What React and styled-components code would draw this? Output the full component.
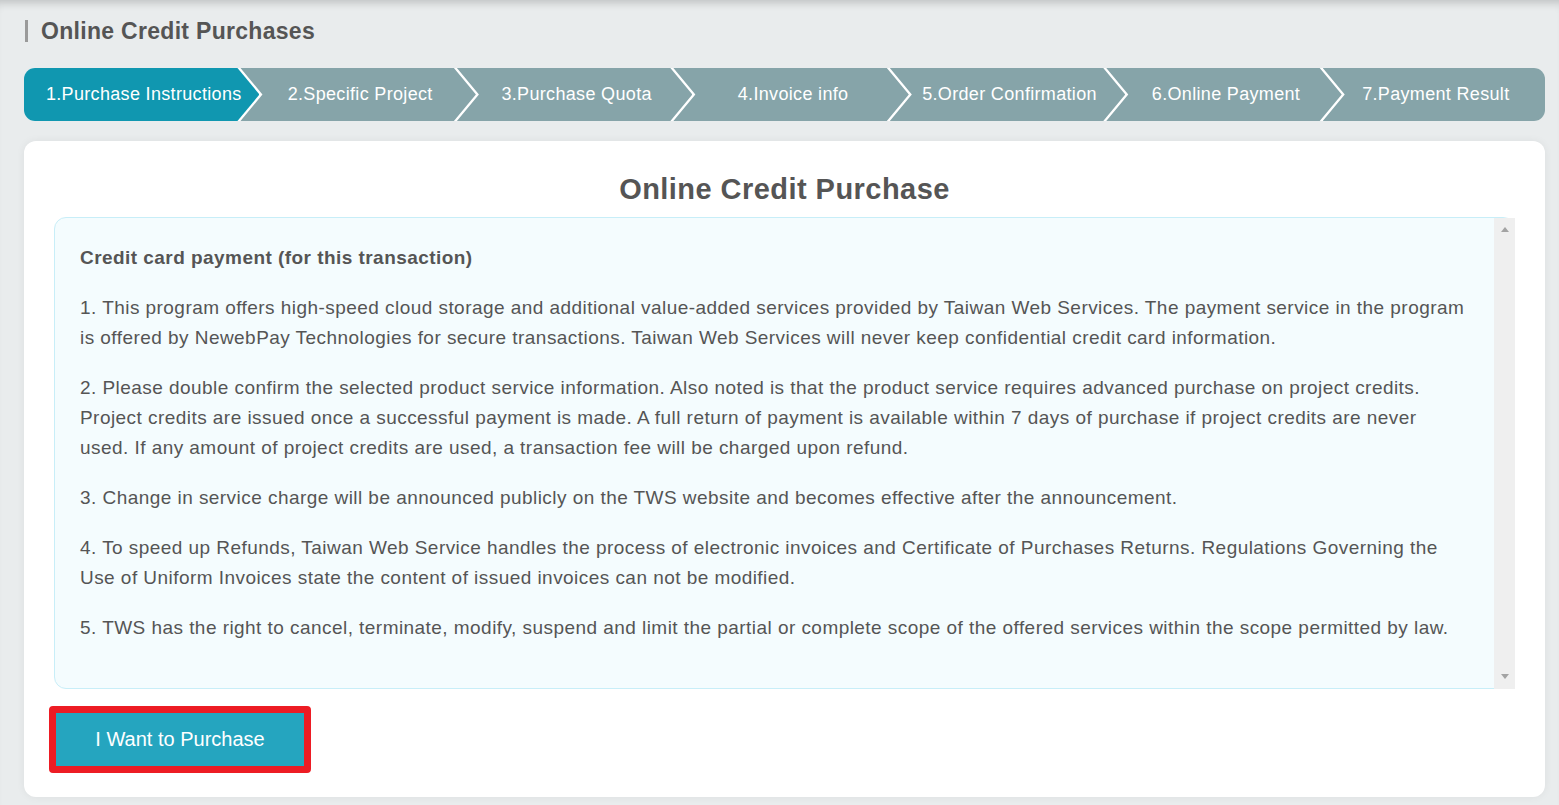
import React from 'react';
import styled, { createGlobalStyle } from 'styled-components';

const color = {
  page: '#e9eced',
  text: '#555555',
  active: '#1097b0',
  step: '#86a4a9',
  button: '#25a5bf',
  highlight: '#ed1c24',
  boxBg: '#f4fcfe',
  boxBorder: '#c8eef8',
};

const GlobalStyle = createGlobalStyle`
  * { box-sizing: border-box; }
  html, body {
    margin: 0;
    background: ${color.page};
    font-family: "Liberation Sans", Arial, sans-serif;
    color: ${color.text};
  }
`;

const Page = styled.div`
  min-height: 805px;
  padding: 18px 14px 0 24px;
  box-shadow: inset 0 9px 9px -6px rgba(0, 0, 0, 0.18);
`;

const PageTitle = styled.h1`
  display: flex;
  align-items: center;
  gap: 13px;
  margin: 0 0 24px 1px;
  height: 26px;
  font-size: 23px;
  letter-spacing: 0.3px;
  font-weight: bold;
  color: ${color.text};

  &::before {
    content: '';
    width: 3px;
    height: 22px;
    background: #9a9a9a;
  }
`;

const Stepper = styled.ol`
  display: flex;
  margin: 0;
  padding: 0;
  list-style: none;
  height: 53px;
  border-radius: 11px;
  overflow: hidden;
  background: #ffffff;
`;

// arrow-shaped step; first has no notch, last has no tip
const Step = styled.li`
  flex: ${(p) => (p.$last ? 0.943 : 1)} 1 0;
  margin-left: ${(p) => (p.$first ? '0' : '-19px')};
  display: flex;
  align-items: center;
  justify-content: center;
  padding-left: 4px;
  font-size: 18px;
  letter-spacing: 0.33px;
  color: #ffffff;
  white-space: nowrap;
  background: ${(p) => (p.$active ? color.active : color.step)};
  clip-path: ${(p) =>
    p.$last
      ? 'polygon(0 0, 100% 0, 100% 100%, 0 100%, 22px 50%)'
      : p.$first
      ? 'polygon(0 0, calc(100% - 22px) 0, 100% 50%, calc(100% - 22px) 100%, 0 100%)'
      : 'polygon(0 0, calc(100% - 22px) 0, 100% 50%, calc(100% - 22px) 100%, 0 100%, 22px 50%)'};
`;

const Card = styled.section`
  margin-top: 20px;
  background: #ffffff;
  border-radius: 12px;
  padding: 28px 30px 24px;
  box-shadow: 0 0 8px rgba(0, 0, 0, 0.06);
`;

const CardTitle = styled.h2`
  margin: 0;
  line-height: 40px;
  font-size: 29px;
  letter-spacing: 0.45px;
  font-weight: bold;
  text-align: center;
  color: ${color.text};
`;

const NoticeBox = styled.div`
  display: flex;
  margin-top: 8px;
  height: 472px;
  background: ${color.boxBg};
  border: 1px solid ${color.boxBorder};
  border-radius: 12px;
`;

const NoticeText = styled.div`
  flex: 1;
  padding: 25px 25px 0 25px;
  font-size: 19px;
  letter-spacing: 0.45px;
  line-height: 30px;
  color: ${color.text};

  p {
    margin: 0 0 20px;
  }
`;

const NoticeHeading = styled.p`
  font-weight: bold;
  letter-spacing: 0.45px;
`;

const ScrollRail = styled.div`
  width: 21px;
  margin: 0 -1px -1px 0;
  background: #efefef;
  display: flex;
  flex-direction: column;
  justify-content: space-between;
  align-items: center;
  padding: 9px 0 10px;
`;

const RailArrow = styled.span`
  width: 0;
  height: 0;
  border-left: 4.5px solid transparent;
  border-right: 4.5px solid transparent;
  ${(p) =>
    p.$down
      ? 'border-top: 5px solid #a3a3a3;'
      : 'border-bottom: 5px solid #a3a3a3;'}
`;

const Highlight = styled.div`
  display: inline-block;
  margin: 17px 0 0 -5px;
  border: 7px solid ${color.highlight};
  border-radius: 4px;
`;

const PurchaseButton = styled.button`
  display: block;
  width: 248px;
  height: 53px;
  border: none;
  background: ${color.button};
  color: #ffffff;
  font-family: "Liberation Sans", Arial, sans-serif;
  font-size: 20px;
  cursor: pointer;
`;

const steps = [
  '1.Purchase Instructions',
  '2.Specific Project',
  '3.Purchase Quota',
  '4.Invoice info',
  '5.Order Confirmation',
  '6.Online Payment',
  '7.Payment Result',
];

const terms = [
  '1. This program offers high-speed cloud storage and additional value-added services provided by Taiwan Web Services. The payment service in the program is offered by NewebPay Technologies for secure transactions. Taiwan Web Services will never keep confidential credit card information.',
  '2. Please double confirm the selected product service information. Also noted is that the product service requires advanced purchase on project credits. Project credits are issued once a successful payment is made. A full return of payment is available within 7 days of purchase if project credits are never used. If any amount of project credits are used, a transaction fee will be charged upon refund.',
  '3. Change in service charge will be announced publicly on the TWS website and becomes effective after the announcement.',
  '4. To speed up Refunds, Taiwan Web Service handles the process of electronic invoices and Certificate of Purchases Returns. Regulations Governing the Use of Uniform Invoices state the content of issued invoices can not be modified.',
  '5. TWS has the right to cancel, terminate, modify, suspend and limit the partial or complete scope of the offered services within the scope permitted by law.',
];

export default function App() {
  return (
    <Page>
      <GlobalStyle />
      <PageTitle>Online Credit Purchases</PageTitle>
      <Stepper>
        {steps.map((label, i) => (
          <Step
            key={label}
            $first={i === 0}
            $last={i === steps.length - 1}
            $active={i === 0}
          >
            {label}
          </Step>
        ))}
      </Stepper>
      <Card>
        <CardTitle>Online Credit Purchase</CardTitle>
        <NoticeBox>
          <NoticeText>
            <NoticeHeading>Credit card payment (for this transaction)</NoticeHeading>
            {terms.map((t) => (
              <p key={t.slice(0, 8)}>{t}</p>
            ))}
          </NoticeText>
          <ScrollRail>
            <RailArrow />
            <RailArrow $down />
          </ScrollRail>
        </NoticeBox>
        <Highlight>
          <PurchaseButton>I Want to Purchase</PurchaseButton>
        </Highlight>
      </Card>
    </Page>
  );
}
